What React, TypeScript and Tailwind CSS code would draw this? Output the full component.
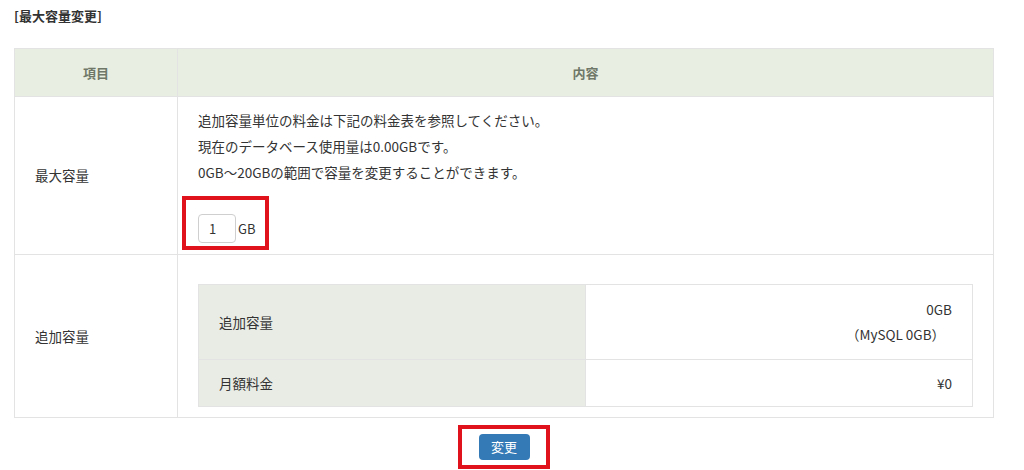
import React from "react";

export default function App() {
  return (
    <div className="w-[1024px] h-[470px] bg-white text-[#333] overflow-hidden" style={{ fontFamily: '"Noto Sans CJK JP", "Noto Sans", sans-serif' }}>
      <div className="pl-[14px] pt-[6px] h-[48px] text-[13px] font-bold leading-[20px] text-[#333]">[最大容量変更]</div>
      <table className="ml-[14px] w-[980px] border-collapse text-[13.5px]">
        <thead>
          <tr className="h-[48px] bg-[#e8eee2] text-[#6f7868] font-bold text-[13px]">
            <th className="w-[163px] border border-[#e3e3e3] font-bold">項目</th>
            <th className="border border-[#e3e3e3] font-bold">内容</th>
          </tr>
        </thead>
        <tbody>
          <tr className="h-[158px]">
            <td className="border border-[#e3e3e3] pl-[20px] align-middle">最大容量</td>
            <td className="border border-[#e3e3e3] pl-[20px] pr-[20px] pt-[10px] pb-[9px] align-top">
              <div className="leading-[26px]">
                <p>追加容量単位の料金は下記の料金表を参照してください。</p>
                <p>現在のデータベース使用量は0.00GBです。</p>
                <p>0GB～20GBの範囲で容量を変更することができます。</p>
              </div>
              <div className="relative mt-[29px] flex items-center w-fit">
                <div className="w-[38px] h-[29px] border border-[#cfcfcf] rounded-[4px] pl-[10px] flex items-center text-[13px]">1</div>
                <span className="ml-[2px] text-[13px]">GB</span>
                <div className="absolute left-[-16px] top-[-18px] right-[-13px] bottom-[-7px] border-[4px] border-[#e0121b]"></div>
              </div>
            </td>
          </tr>
          <tr className="h-[162px]">
            <td className="border border-[#e3e3e3] pl-[20px] align-middle">追加容量</td>
            <td className="border border-[#e3e3e3] pl-[20px] pr-[20px] pt-[29px] pb-[10px] align-top">
              <table className="w-full border-collapse">
                <tbody>
                  <tr className="h-[75px]">
                    <td className="w-[387px] bg-[#e9ece5] border border-[#e3e3e3] pl-[20px] align-middle">追加容量</td>
                    <td className="border border-[#e3e3e3] pr-[20px] text-right align-middle leading-[25px]">
                      <p>0GB</p>
                      <p className="pr-[7px]">（MySQL 0GB）</p>
                    </td>
                  </tr>
                  <tr className="h-[47px]">
                    <td className="bg-[#e9ece5] border border-[#e3e3e3] pl-[20px] align-middle">月額料金</td>
                    <td className="border border-[#e3e3e3] pr-[20px] text-right align-middle">¥0</td>
                  </tr>
                </tbody>
              </table>
            </td>
          </tr>
        </tbody>
      </table>
      <div className="ml-[14px] w-[980px] flex justify-center pt-[15px]">
        <div className="relative">
          <button className="w-[51px] h-[26px] rounded-[4px] bg-[#337ab7] text-white text-[13px] leading-[26px]">変更</button>
          <div className="absolute left-[-21px] top-[-8px] right-[-20px] bottom-[-9px] border-[4px] border-[#e0121b]"></div>
        </div>
      </div>
    </div>
  );
}
